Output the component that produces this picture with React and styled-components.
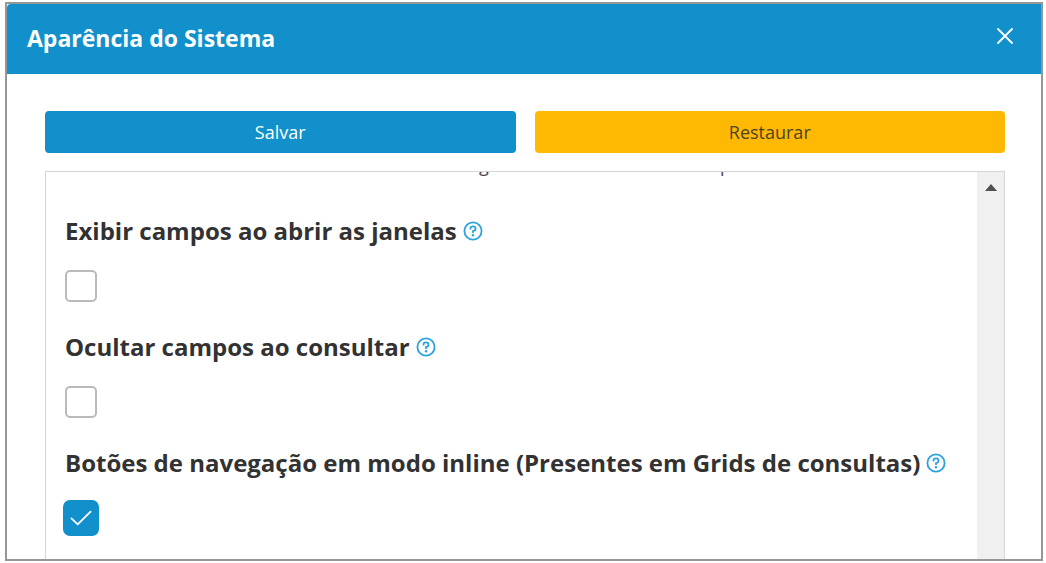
import React, {useState} from 'react'
import styled, {createGlobalStyle} from 'styled-components'

const GlobalStyle = createGlobalStyle`
    * {
        box-sizing: border-box;
    }
    body {
        margin: 0;
        background: #fff;
        font-family: "Open Sans", "Noto Sans", sans-serif;
    }
`
const Page = styled.div`
    display: flex;
    height: 100vh;
    padding: 2px 3px 2px 5px;
`
const Dialog = styled.section`
    display: flex;
    flex: 1;
    flex-direction: column;
    min-width: 0;
    border: 2px solid #979797;
    background: #fff;
`
const Header = styled.header`
    display: flex;
    justify-content: space-between;
    align-items: flex-start;
    padding: 16px 20px 18px;
    border-radius: 4px 0 0 0;
    background: #1190cb;
    color: #fff;
`
const Title = styled.h1`
    margin: 0;
    font-size: 23px;
    line-height: 36px;
    font-weight: 700;
`
const IconButton = styled.button`
    display: flex;
    align-items: center;
    justify-content: center;
    width: 32px;
    height: 32px;
    padding: 0;
    border: 0;
    background: none;
    color: inherit;
    cursor: pointer;
`
const HelpButton = styled(IconButton)`
    width: 20px;
    height: 20px;
    color: #2ba2dc;
`
const Body = styled.div`
    display: flex;
    flex: 1;
    flex-direction: column;
    gap: 18px;
    min-height: 0;
    padding: 37px 36px 0 38px;
`
const Actions = styled.div`
    display: grid;
    grid-template-columns: 1fr 1fr;
    gap: 19px;
`
const ActionButton = styled.button`
    height: 42px;
    padding: 0 16px;
    border: 0;
    border-radius: 4px;
    background: ${({$warning}) => ($warning ? '#ffb903' : '#1190cb')};
    color: ${({$warning}) => ($warning ? '#4d4326' : '#fff')};
    font-family: inherit;
    font-size: 18px;
    cursor: pointer;
`
const Panel = styled.div`
    display: flex;
    flex: 1;
    min-height: 0;
    overflow: hidden;
    border: 1px solid #d6d6d6;
    border-bottom: 0;
`
const Content = styled.div`
    flex: 1;
    min-width: 0;
`
const ScrolledText = styled.p`
    display: grid;
    grid-template-columns: 433fr 241fr 257fr;
    align-content: end;
    height: 5px;
    margin: 0;
    overflow: hidden;
    color: #444;
    font-size: 18px;
    line-height: 24px;
`
const Letter = styled.span`
    grid-column: ${({$column}) => $column};
`
const Settings = styled.div`
    display: grid;
    gap: 27px;
    padding: 36px 19px;
`
const Setting = styled.div`
    display: grid;
    gap: 21px;
`
const LabelRow = styled.div`
    display: flex;
    align-items: center;
    gap: 6px;
`
const Label = styled.label`
    color: #323232;
    font-size: 24px;
    line-height: 36px;
    font-weight: 700;
    white-space: nowrap;
`
const CheckWrap = styled.div`
    display: grid;
    width: 32px;
    height: 32px;
    place-items: center;

    > * {
        grid-area: 1 / 1;
    }
    svg {
        pointer-events: none;
    }
`
const CheckInput = styled.input`
    appearance: none;
    width: 32px;
    height: 32px;
    margin: 0;
    border: 2px solid #bababa;
    border-radius: 5px;
    background: #fff;

    &:checked {
        border-color: #1190cb;
        background: #1190cb;
        box-shadow: 0 0 0 2px #1190cb;
    }
`
const Scrollbar = styled.div`
    display: flex;
    justify-content: center;
    width: 27px;
    padding-top: 12px;
    background: #f0f0f0;
`

const items = [
    {id: 'exibir', label: 'Exibir campos ao abrir as janelas'},
    {id: 'ocultar', label: 'Ocultar campos ao consultar'},
    {id: 'inline', label: 'Botões de navegação em modo inline (Presentes em Grids de consultas)', checked: true},
]

const CloseIcon = () => (
    <svg width="16" height="16" viewBox="0 0 16 16" fill="none" stroke="currentColor" strokeWidth="1.8" strokeLinecap="round">
        <path d="M1 1l14 14M15 1L1 15" />
    </svg>
)

const HelpIcon = () => (
    <svg width="20" height="20" viewBox="0 0 20 20" fill="none" stroke="currentColor" strokeWidth="1.8" strokeLinecap="round">
        <circle cx="10" cy="10" r="8.6" />
        <path d="M7.5 7.7C7.5 6.3 8.6 5.4 10 5.4s2.5 1 2.5 2.3c0 1.3-1 2.1-2.5 2.4v1.2" />
        <circle cx="10" cy="14.2" r="1.2" fill="currentColor" stroke="none" />
    </svg>
)

const CheckIcon = () => (
    <svg width="22" height="16" viewBox="0 0 22 16" fill="none" stroke="#fff" strokeWidth="1.8" strokeLinecap="round" strokeLinejoin="round">
        <path d="M1.4 8.4l6.3 6L20.6 1.6" />
    </svg>
)

const CheckSetting = ({item}) => {
    const [checked, setChecked] = useState(Boolean(item.checked))
    return (
        <Setting>
            <LabelRow>
                <Label htmlFor={item.id}>{item.label}</Label>
                <HelpButton type="button" aria-label="Ajuda">
                    <HelpIcon />
                </HelpButton>
            </LabelRow>
            <CheckWrap>
                <CheckInput
                    id={item.id}
                    type="checkbox"
                    checked={checked}
                    onChange={e => setChecked(e.target.checked)}
                />
                {checked && <CheckIcon />}
            </CheckWrap>
        </Setting>
    )
}

const App = () => {
    return (
        <Page>
            <GlobalStyle />
            <Dialog>
                <Header>
                    <Title>Aparência do Sistema</Title>
                    <IconButton type="button" aria-label="Fechar">
                        <CloseIcon />
                    </IconButton>
                </Header>
                <Body>
                    <Actions>
                        <ActionButton type="button">Salvar</ActionButton>
                        <ActionButton type="button" $warning>Restaurar</ActionButton>
                    </Actions>
                    <Panel>
                        <Content>
                            <ScrolledText>
                                <Letter $column={2}>g</Letter>
                                <Letter $column={3}>p</Letter>
                            </ScrolledText>
                            <Settings>
                                {items.map(item => <CheckSetting key={item.id} item={item} />)}
                            </Settings>
                        </Content>
                        <Scrollbar>
                            <svg width="12" height="7" viewBox="0 0 12 7">
                                <path d="M6 0l6 7H0z" fill="#505050" />
                            </svg>
                        </Scrollbar>
                    </Panel>
                </Body>
            </Dialog>
        </Page>
    )
}

export default App
